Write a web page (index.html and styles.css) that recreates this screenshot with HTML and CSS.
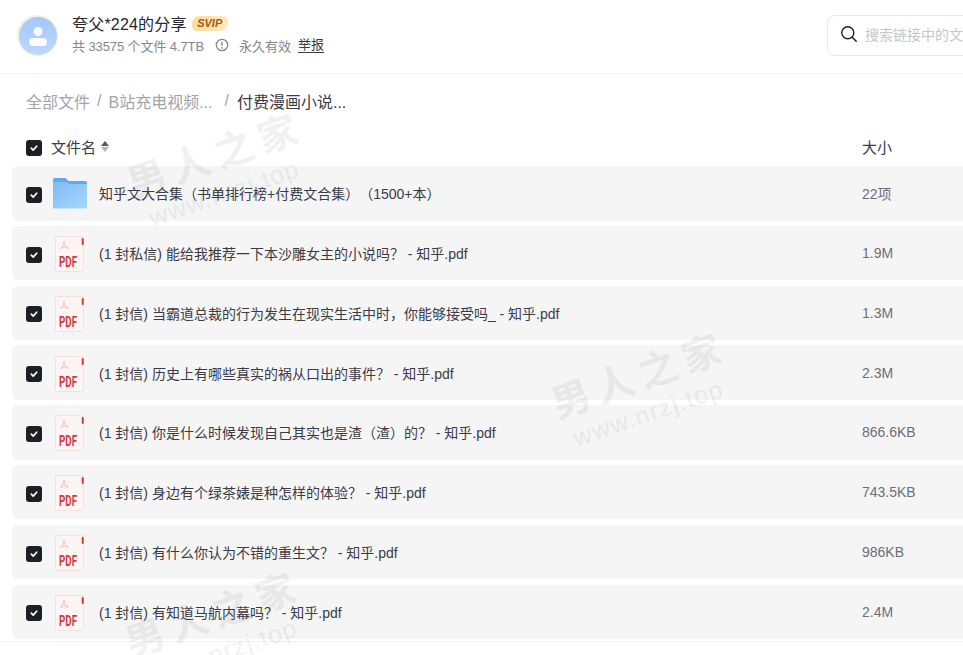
FILE: index.html
```html
<!DOCTYPE html>
<html lang="zh-CN">
<head>
  <meta charset="UTF-8" />
  <title>夸父*224的分享</title>
  <link rel="stylesheet" href="styles.css">
</head>
<body>
  <svg class="icon-defs" width="0" height="0">
    <symbol id="check" viewBox="0 0 16 16">
      <rect width="16" height="16" rx="3" fill="#1d1e26"/>
      <path d="M5.300 8.200l1.900 1.900 3.500-3.900" fill="none" stroke="#fff" stroke-width="1.700" stroke-linecap="round" stroke-linejoin="round"/>
    </symbol>
    <symbol id="pdf" viewBox="0 0 32 36">
      <path d="M2.500 .5h25a2 2 0 0 1 2 2v31a2 2 0 0 1-2 2h-25a1 1 0 0 1-1-1v-33a1 1 0 0 1 1-1z" fill="#fdf5f4" stroke="#f9dfdc"/>
      <rect x="27.700" y="2" width="2" height="7" rx="1" fill="#d9343a"/>
      <path d="M6.500 12.500c3-2 6-2 8-.5M10 5c0 3 1.500 6 4 8M6.500 13c2-2 3.500-5 3.500-8" fill="none" stroke="#f5c3bf" stroke-width="1"/>
      <text x="14" y="31" textLength="18" lengthAdjust="spacingAndGlyphs" class="pdf-label">PDF</text>
    </symbol>
  </svg>

  <div class="page">
    <header class="top">
      <div class="avatar">
        <svg width="38" height="38" viewBox="0 0 38 38">
          <defs>
            <linearGradient id="av" x1="0" y1="0" x2="0" y2="1">
              <stop offset="0" stop-color="#a3c8fd"/>
              <stop offset="1" stop-color="#bcd8fe"/>
            </linearGradient>
          </defs>
          <circle cx="19" cy="19" r="19" fill="url(#av)"/>
          <circle cx="19" cy="14.500" r="4.500" fill="#fff" opacity=".9"/>
          <rect x="10" y="21" width="18" height="8" rx="4" fill="#fff" opacity=".95"/>
        </svg>
      </div>
      <div class="share">
        <div class="share-title">
          <span class="share-name">夸父*224的分享</span>
          <span class="svip">SVIP</span>
        </div>
        <div class="share-meta">
          <span class="share-count">共 33575 个文件 4.7TB</span>
          <svg class="info" width="14" height="14" viewBox="0 0 14 14">
            <circle cx="7" cy="7" r="5.700" fill="none" stroke="#85868c" stroke-width="1.300"/>
            <path d="M7 3.800v4" stroke="#85868c" stroke-width="1.400"/>
            <circle cx="7" cy="9.800" r=".9" fill="#85868c"/>
          </svg>
          <span>永久有效</span>
          <a class="report">举报</a>
        </div>
      </div>
      <div class="search">
        <svg width="18" height="18" viewBox="0 0 18 18">
          <circle cx="7.800" cy="7.800" r="6" fill="none" stroke="#1d1e26" stroke-width="1.400"/>
          <path d="M12.200 12.200l4 4" stroke="#1d1e26" stroke-width="1.500" stroke-linecap="round"/>
        </svg>
        <span class="search-hint">搜索链接中的文件</span>
      </div>
    </header>

    <nav class="crumbs">
      <span>全部文件</span>
      <span class="sep">/</span>
      <span>B站充电视频...</span>
      <span class="sep sep-wide">/</span>
      <span class="current">付费漫画小说...</span>
    </nav>

    <div class="list-head">
      <svg class="box" width="16" height="16"><use href="#check"/></svg>
      <span class="col-name">文件名</span>
      <span class="sort"><i class="up"></i><i class="down"></i></span>
      <span class="col-size">大小</span>
    </div>

    <main class="rows">
      <div class="row">
        <svg class="box" width="16" height="16"><use href="#check"/></svg>
        <svg class="folder" width="36" height="32" viewBox="0 0 36 32">
          <defs>
            <linearGradient id="fd" x1="0" y1="0" x2="1" y2="1">
              <stop offset="0" stop-color="#7dbcf6"/>
              <stop offset="1" stop-color="#a9d6fc"/>
            </linearGradient>
          </defs>
          <path d="M1 2.500a1.500 1.500 0 0 1 1.500-1.500h11l3 3h17a1.500 1.500 0 0 1 1.500 1.500v4.500h-34z" fill="#62a9ec"/>
          <path d="M1 5h14l2.500 2h17.500v23.500a1 1 0 0 1-1 1h-32a1 1 0 0 1-1-1z" fill="url(#fd)"/>
        </svg>
        <span class="name">知乎文大合集（书单排行榜+付费文合集）（1500+本）</span>
        <span class="size">22项</span>
      </div>
      <div class="row">
        <svg class="box" width="16" height="16"><use href="#check"/></svg>
        <svg class="pdf" width="32" height="36"><use href="#pdf"/></svg>
        <span class="name">(1 封私信) 能给我推荐一下本沙雕女主的小说吗？ - 知乎.pdf</span>
        <span class="size">1.9M</span>
      </div>
      <div class="row">
        <svg class="box" width="16" height="16"><use href="#check"/></svg>
        <svg class="pdf" width="32" height="36"><use href="#pdf"/></svg>
        <span class="name">(1 封信) 当霸道总裁的行为发生在现实生活中时，你能够接受吗_ - 知乎.pdf</span>
        <span class="size">1.3M</span>
      </div>
      <div class="row">
        <svg class="box" width="16" height="16"><use href="#check"/></svg>
        <svg class="pdf" width="32" height="36"><use href="#pdf"/></svg>
        <span class="name">(1 封信) 历史上有哪些真实的祸从口出的事件？ - 知乎.pdf</span>
        <span class="size">2.3M</span>
      </div>
      <div class="row">
        <svg class="box" width="16" height="16"><use href="#check"/></svg>
        <svg class="pdf" width="32" height="36"><use href="#pdf"/></svg>
        <span class="name">(1 封信) 你是什么时候发现自己其实也是渣（渣）的？ - 知乎.pdf</span>
        <span class="size">866.6KB</span>
      </div>
      <div class="row">
        <svg class="box" width="16" height="16"><use href="#check"/></svg>
        <svg class="pdf" width="32" height="36"><use href="#pdf"/></svg>
        <span class="name">(1 封信) 身边有个绿茶婊是种怎样的体验？ - 知乎.pdf</span>
        <span class="size">743.5KB</span>
      </div>
      <div class="row">
        <svg class="box" width="16" height="16"><use href="#check"/></svg>
        <svg class="pdf" width="32" height="36"><use href="#pdf"/></svg>
        <span class="name">(1 封信) 有什么你认为不错的重生文？ - 知乎.pdf</span>
        <span class="size">986KB</span>
      </div>
      <div class="row">
        <svg class="box" width="16" height="16"><use href="#check"/></svg>
        <svg class="pdf" width="32" height="36"><use href="#pdf"/></svg>
        <span class="name">(1 封信) 有知道马航内幕吗？ - 知乎.pdf</span>
        <span class="size">2.4M</span>
      </div>
    </main>
    <div class="foot"></div>

    <div class="mark mark-1"><b>男人之家</b><span>www.nrzj.top</span></div>
    <div class="mark mark-2"><b>男人之家</b><span>www.nrzj.top</span></div>
    <div class="mark mark-3"><b>男人之家</b><span>www.nrzj.top</span></div>
  </div>
</body>
</html>
```

FILE: styles.css
```css
* {
  box-sizing: border-box;
}

body {
  margin: 0;
  background: #fff;
  color: #1d1e26;
  font-family: "Liberation Sans", "Noto Sans CJK SC", sans-serif;
  font-size: 14px;
  text-spacing-trim: space-all;
}

.page {
  position: relative;
  height: 100vh;
  overflow: hidden;
}

.icon-defs {
  position: absolute;
}

.box {
  margin-top: 3px;
  flex: none;
}

.pdf-label {
  font: bold 14px "Roboto", sans-serif;
  fill: #d4393e;
  text-anchor: middle;
}

.top {
  display: flex;
  align-items: flex-start;
  height: 74px;
  padding: 15px 0 0 17px;
  border-bottom: 1px solid #f1f1f2;
}

.avatar {
  width: 41px;
  height: 41px;
  padding: 1.5px;
  border-radius: 50%;
  background: #f9eed7;
  flex: none;
}

.avatar svg {
  display: block;
}

.share {
  margin: -2px 0 0 14px;
}

.share-title {
  display: flex;
  align-items: center;
  gap: 5px;
  height: 20px;
  font-size: 16px;
  color: #25262e;
}

.share-name {
  letter-spacing: .2px;
}

.svip {
  width: 36px;
  height: 15px;
  border-radius: 8px 5px 8px 5px;
  background: linear-gradient(90deg, #fbdc9c, #fdeabf);
  color: #a05a14;
  font-size: 11px;
  font-weight: bold;
  font-style: italic;
  line-height: 15px;
  text-align: center;
}

.share-meta {
  display: flex;
  align-items: center;
  height: 18px;
  margin-top: 3px;
  font-size: 13px;
  color: #85868c;
}

.share-count {
  letter-spacing: -.1px;
}

.info {
  margin: 0 10px 0 11px;
}

.report {
  margin-left: 7px;
  line-height: 15px;
  color: #3a3b44;
  border-bottom: 1px solid #3a3b44;
}

.search {
  display: flex;
  align-items: center;
  gap: 7px;
  flex: none;
  width: 180px;
  height: 41px;
  margin: 0 -44px 0 auto;
  padding: 0 0 3px 12px;
  border: 1px solid #e6e6e8;
  border-radius: 8px;
  white-space: nowrap;
  overflow: hidden;
}

.search-hint {
  font-size: 14px;
  color: #c5c6ca;
}

.crumbs {
  display: flex;
  align-items: center;
  height: 20px;
  margin: 17px 0 0 26px;
  font-size: 16px;
  color: #a3a4a9;
}

.sep {
  margin: 0 7px;
}

.sep-wide {
  margin: 0 8px 0 12px;
}

.current {
  color: #3a3b44;
}

.list-head {
  display: flex;
  align-items: center;
  height: 20px;
  margin-top: 25px;
  padding-left: 26px;
  font-size: 15px;
  color: #3a3b44;
}

.col-name {
  margin-left: 9px;
}

.sort {
  display: flex;
  flex-direction: column;
  gap: 1px;
  margin-left: 5px;
}

.sort i {
  display: block;
  width: 0;
  height: 0;
  border-left: 4px solid transparent;
  border-right: 4px solid transparent;
}

.sort .up {
  border-bottom: 5px solid #55565c;
}

.sort .down {
  border-top: 5px solid #b3b4b8;
}

.col-size {
  margin-left: auto;
  width: 101px;
}

.rows {
  margin: 10px 0 0 12px;
}

.row {
  display: flex;
  align-items: center;
  height: 54.5px;
  margin-bottom: 5.3px;
  padding-left: 14px;
  background: #f5f5f6;
  border-radius: 6px 0 0 6px;
}

.row:last-child {
  margin-bottom: 0;
}

.folder {
  margin-left: 10px;
  flex: none;
}

.pdf {
  margin: 2px 0 0 12px;
  flex: none;
}

.name {
  margin-left: 11px;
  color: #3a3b44;
  white-space: nowrap;
}

.pdf + .name {
  margin-left: 13px;
}

.size {
  margin-left: auto;
  width: 101px;
  color: #6d6e75;
}

.foot {
  margin-top: 2px;
  border-top: 1px solid #f1f1f2;
}

.mark {
  position: absolute;
  display: flex;
  flex-direction: column;
  align-items: center;
  width: 240px;
  transform: rotate(-19deg);
  color: #000;
  opacity: .05;
  pointer-events: none;
  white-space: nowrap;
}

.mark b {
  padding-left: 8px;
  font-size: 39px;
  letter-spacing: 7px;
  line-height: 44px;
}

.mark span {
  font-size: 25px;
  letter-spacing: 1.3px;
  line-height: 30px;
}

.mark-1 {
  left: 97px;
  top: 135px;
}

.mark-2 {
  left: 521px;
  top: 355px;
}

.mark-3 {
  left: 95px;
  top: 594px;
}
```
